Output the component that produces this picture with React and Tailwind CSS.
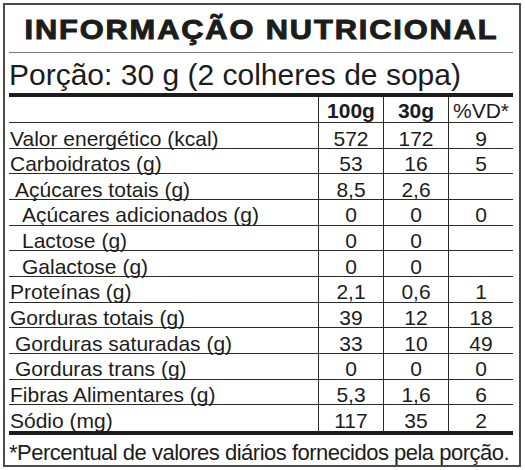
import React from "react";

const rows = [
  { label: "Valor energético (kcal)", indent: 0, a: "572", b: "172", vd: "9" },
  { label: "Carboidratos (g)", indent: 0, a: "53", b: "16", vd: "5" },
  { label: "Açúcares totais (g)", indent: 1, a: "8,5", b: "2,6", vd: "" },
  { label: "Açúcares adicionados (g)", indent: 2, a: "0", b: "0", vd: "0" },
  { label: "Lactose (g)", indent: 2, a: "0", b: "0", vd: "" },
  { label: "Galactose (g)", indent: 2, a: "0", b: "0", vd: "" },
  { label: "Proteínas (g)", indent: 0, a: "2,1", b: "0,6", vd: "1" },
  { label: "Gorduras totais (g)", indent: 0, a: "39", b: "12", vd: "18" },
  { label: "Gorduras saturadas (g)", indent: 1, a: "33", b: "10", vd: "49" },
  { label: "Gorduras trans (g)", indent: 1, a: "0", b: "0", vd: "0" },
  { label: "Fibras Alimentares (g)", indent: 0, a: "5,3", b: "1,6", vd: "6" },
  { label: "Sódio (mg)", indent: 0, a: "117", b: "35", vd: "2" },
];

const indents = ["pl-[1px]", "pl-[6px]", "pl-[13px]"];

function Row({ row, last }) {
  return (
    <div
      className={`grid grid-cols-[309px_65px_65px_65px] h-[25.67px] text-[21px] leading-[23px] ${
        last ? "" : "border-b border-[#2a2a2a]"
      }`}
    >
      <div className={`pt-[3.5px] whitespace-nowrap ${indents[row.indent]}`}>{row.label}</div>
      <div className="pt-[3.5px] text-center border-l border-[#2a2a2a]">{row.a}</div>
      <div className="pt-[3.5px] text-center border-l border-[#2a2a2a]">{row.b}</div>
      <div className="pt-[3.5px] text-center border-l border-[#2a2a2a]">{row.vd}</div>
    </div>
  );
}

export default function App() {
  return (
    <div className="w-[525px] h-[470px] bg-white p-[3px]">
      <div className="w-[518px] h-[464px] border-2 border-[#4a4a4a] pl-[4px] pr-[6px] font-['Liberation_Sans',Arial,sans-serif] text-[#1c1c1c]">
        {/* titulo */}
        <div className="h-[48px] border-b border-[#7a7a7a] pt-[11px] text-center leading-[28px]">
          <span className="inline-block scale-x-[1.1] text-[28px] font-bold tracking-[1.7px] [-webkit-text-stroke:1px_#1c1c1c]">
            INFORMAÇÃO NUTRICIONAL
          </span>
        </div>

        {/* porcao */}
        <div className="h-[44px] border-b-4 border-[#1c1c1c] pt-[7px] text-[30px] leading-[30px] whitespace-nowrap">
          Porção: 30 g (2 colheres de sopa)
        </div>

        {/* cabecalho */}
        <div className="grid grid-cols-[309px_65px_65px_65px] h-[26px] border-b border-[#2a2a2a] text-[21px] leading-[23px]">
          <div></div>
          <div className="pt-[1.5px] text-center font-bold border-l border-[#2a2a2a]">100g</div>
          <div className="pt-[1.5px] text-center font-bold border-l border-[#2a2a2a]">30g</div>
          <div className="pt-[1.5px] text-center border-l border-[#2a2a2a]">%VD*</div>
        </div>

        <div>
          {rows.map((r, i) => (
            <Row key={r.label} row={r} last={i === rows.length - 1} />
          ))}
        </div>

        <div className="h-[4px] bg-[#1c1c1c]"></div>

        {/* rodape */}
        <div className="h-[30px] pt-[5px] text-[22px] leading-[25px] tracking-[-0.5px] whitespace-nowrap">
          *Percentual de valores diários fornecidos pela porção.
        </div>
      </div>
    </div>
  );
}
